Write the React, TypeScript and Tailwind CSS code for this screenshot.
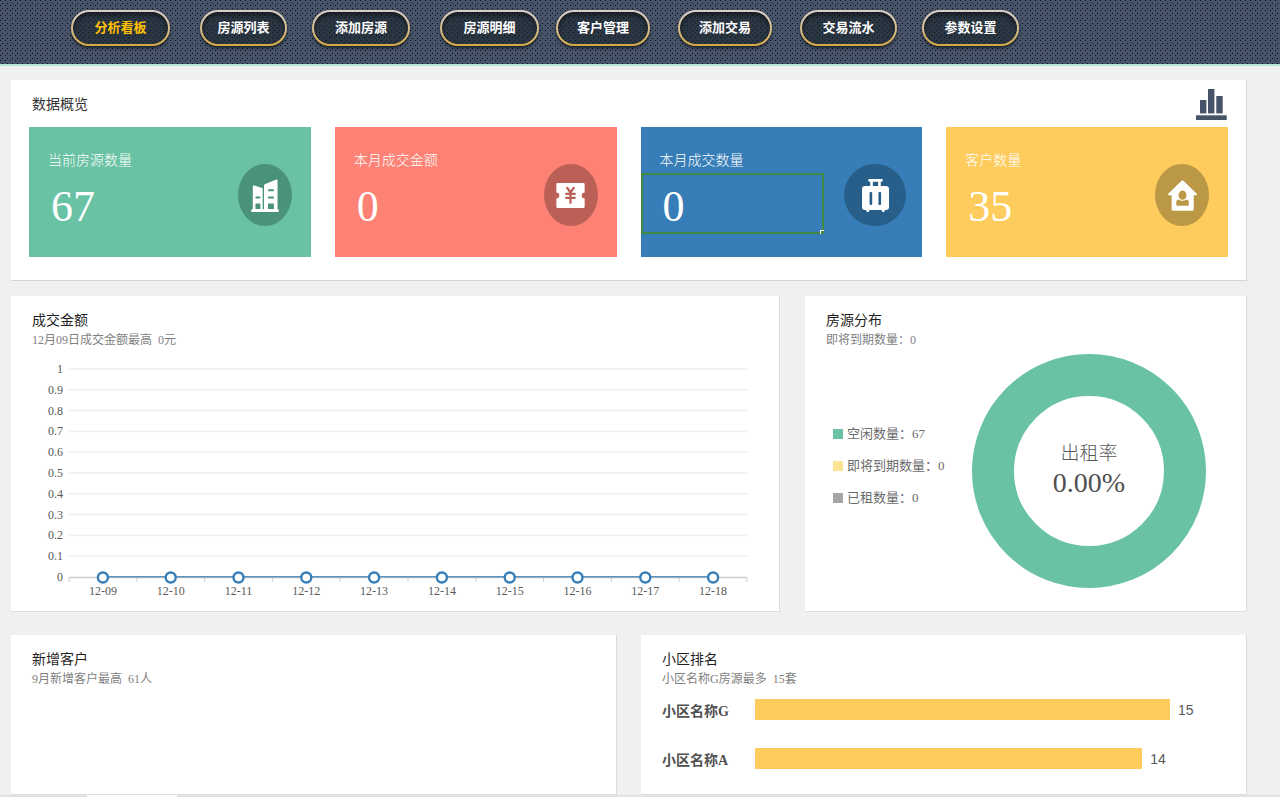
import type { ReactNode } from 'react';
import clsx from 'clsx';

interface NavItem {
    label: string;
    className: string;
}

interface Stat {
    label: string;
    value: number;
    tile: string;
    badge: string;
    icon: ReactNode;
    selected?: boolean;
}

const NAV_ITEMS: NavItem[] = [
    { label: '分析看板', className: 'w-[99px]' },
    { label: '房源列表', className: 'w-[87px] ml-[30px]' },
    { label: '添加房源', className: 'w-[98px] ml-[25px]' },
    { label: '房源明细', className: 'w-[99px] ml-[30px]' },
    { label: '客户管理', className: 'w-[94px] ml-[17px]' },
    { label: '添加交易', className: 'w-[94px] ml-[28px]' },
    { label: '交易流水', className: 'w-[97px] ml-[28px]' },
    { label: '参数设置', className: 'w-[97px] ml-[25px]' },
];

const DAYS = ['12-09', '12-10', '12-11', '12-12', '12-13', '12-14', '12-15', '12-16', '12-17', '12-18'];
const TICKS = ['1', '0.9', '0.8', '0.7', '0.6', '0.5', '0.4', '0.3', '0.2', '0.1', '0'];

const LEGEND = [
    { label: '空闲数量：67', swatch: 'bg-[#68c2a3]' },
    { label: '即将到期数量：0', swatch: 'bg-[#fee294]' },
    { label: '已租数量：0', swatch: 'bg-[#a5a5a5]' },
];

const RANKING = [
    { name: '小区名称G', count: 15 },
    { name: '小区名称A', count: 14 },
];

function BuildingIcon() {
    return (
        <svg viewBox="0 0 84 100" className="h-[33px] w-[28px]" aria-hidden="true">
            <g fill="#fff">
                <path d="M5 23q0-5 5-3l25 8v66H5z" />
                <path d="M39 20q0-4 4-5L75 2q5-1 5 4v88H39z" />
                <rect y="92" width="84" height="8" rx="3" />
            </g>
            <g fill="#4a937a">
                <rect x="13" y="53" width="15" height="6" rx="2" />
                <rect x="13" y="74" width="15" height="17" rx="1" />
                <rect x="51" y="31" width="18" height="6" rx="2" />
                <rect x="51" y="53" width="18" height="6" rx="2" />
                <rect x="51" y="74" width="18" height="17" rx="1" />
            </g>
        </svg>
    );
}

function TicketIcon() {
    return (
        <svg viewBox="0 0 86 76" className="h-[25px] w-[29px]" aria-hidden="true">
            <path d="M4 0h78q4 0 4 4v25a9 9 0 0 0 0 18v25q0 4-4 4H4q-4 0-4-4V47a9 9 0 0 0 0-18V4q0-4 4-4z" fill="#fff" />
            <path d="M33 15l10 14 10-14M43 29v31M30 33h26M30 45h26" fill="none" stroke="#bb6057" strokeWidth="7" strokeLinecap="round" />
        </svg>
    );
}

function SuitcaseIcon() {
    return (
        <svg viewBox="0 0 82 100" className="h-[33px] w-[27px]" aria-hidden="true">
            <g fill="#fff">
                <rect x="19" width="44" height="8" rx="4" />
                <rect x="25" y="3" width="8" height="24" />
                <rect x="49" y="3" width="8" height="24" />
                <rect y="21" width="82" height="73" rx="9" />
                <rect x="13" y="88" width="9" height="12" rx="4" />
                <rect x="60" y="88" width="9" height="12" rx="4" />
            </g>
            <rect x="23" y="39" width="8" height="40" rx="3" fill="#285f8a" />
            <rect x="50" y="39" width="8" height="40" rx="3" fill="#285f8a" />
        </svg>
    );
}

function HouseIcon() {
    return (
        <svg viewBox="0 0 88 92" className="h-[31px] w-[29px]" aria-hidden="true">
            <path d="M41 1q3-2 6 0l40 40q3 4-2 4h-7v43q0 4-4 4H15q-4 0-4-4V45H3q-5 0-2-4z" fill="#fff" />
            <ellipse cx="44" cy="45" rx="12" ry="14" fill="#bb9845" />
            <path d="M25 65q0-6 7-7 12 8 24 0 7 1 7 7v9q0 3-3 3H28q-3 0-3-3z" fill="#bb9845" />
        </svg>
    );
}

const STATS: Stat[] = [
    { label: '当前房源数量', value: 67, tile: 'bg-[#68c2a3]', badge: 'w-[54px] mr-[19px] bg-[#4a937a]', icon: <BuildingIcon /> },
    { label: '本月成交金额', value: 0, tile: 'bg-[#fd8174]', badge: 'w-[54px] mr-[19px] bg-[#bb6057]', icon: <TicketIcon /> },
    { label: '本月成交数量', value: 0, tile: 'bg-[#377eb8]', badge: 'w-[62px] mr-[16px] bg-[#285f8a]', icon: <SuitcaseIcon />, selected: true },
    { label: '客户数量', value: 35, tile: 'bg-[#fecc5c]', badge: 'w-[54px] mr-[19px] bg-[#bb9845]', icon: <HouseIcon /> },
];

function Header() {
    return (
        <header className="shrink-0 border-b-2 border-[#b5e6d8] bg-[#465368] bg-[conic-gradient(at_1px_1px,transparent_75%,#0b0f17_0),conic-gradient(at_1px_1px,transparent_75%,#0b0f17_0)] bg-size-[5px_5px] bg-position-[0_0,2px_3px]">
            <nav className="flex h-16 items-start pt-[10px] pl-[71px]">
                {NAV_ITEMS.map((item, index) => (
                    <button
                        key={item.label}
                        type="button"
                        className={clsx(
                            'h-9 shrink-0 rounded-full bg-linear-to-b from-[#d8cfcc] to-[#d3a93f] p-[2px] shadow-[0_2px_3px_rgba(0,0,0,0.6)]',
                            item.className,
                        )}
                    >
                        <span
                            className={clsx(
                                'flex h-8 items-center justify-center rounded-full bg-[#2b3643] bg-[conic-gradient(at_1px_1px,transparent_75%,#10161d_0),conic-gradient(at_1px_1px,transparent_75%,#10161d_0)] bg-size-[5px_5px] bg-position-[0_0,2px_3px] text-[13px] font-bold shadow-[inset_0_3px_4px_rgba(0,0,0,0.5)]',
                                index === 0 ? 'text-[#ffc000]' : 'text-white',
                            )}
                        >
                            {item.label}
                        </span>
                    </button>
                ))}
            </nav>
        </header>
    );
}

function Panel({ title, subtitle, children }: { title: string; subtitle: string; children?: ReactNode }) {
    return (
        <section className="min-w-0 border-r border-b border-[#dcdcdc] bg-white pt-[15px]">
            <h2 className="pl-[21px] text-sm leading-5 text-[#1f1f1f]">{title}</h2>
            <p className="pl-[21px] text-xs leading-[18px] whitespace-pre text-[#7f7f7f]">{subtitle}</p>
            {children}
        </section>
    );
}

function Overview() {
    return (
        <section className="h-[201px] border-r border-b border-[#d4d4d4] bg-white px-[18px] pt-[9px]">
            <div className="flex h-[38px] items-start justify-between">
                <h2 className="pt-[6px] pl-[3px] text-sm leading-5 text-[#333]">数据概览</h2>
                <svg viewBox="0 0 31 31" className="mr-px h-[31px] w-[31px]" fill="#465368" aria-hidden="true">
                    <rect x="4" y="11" width="6.4" height="13.4" />
                    <rect x="12" y="0" width="6.4" height="24.4" />
                    <rect x="20.3" y="7" width="6.4" height="17.4" />
                    <rect x="0" y="26.3" width="30.7" height="4.7" />
                </svg>
            </div>
            <div className="grid grid-cols-4 gap-6">
                {STATS.map((stat) => (
                    <div key={stat.label} className={clsx('flex h-[130px] items-start justify-between', stat.tile)}>
                        <div className="w-[65%]">
                            <div className="flex h-[46px] items-end pb-[2px] pl-[19px] text-sm font-light text-white">
                                {stat.label}
                            </div>
                            <div
                                className={clsx(
                                    'relative flex h-[61px] items-center border-2 pt-[6px] pl-[20px] text-[44px] leading-none text-white',
                                    stat.selected ? 'border-[#3f8a3f]' : 'border-transparent',
                                )}
                            >
                                {stat.value}
                                {stat.selected && (
                                    <span className="absolute -right-[2px] -bottom-[2px] h-1 w-1 border-t border-l border-white bg-[#3f8a3f]" />
                                )}
                            </div>
                        </div>
                        <div className={clsx('mt-[37px] flex h-[62px] items-center justify-center rounded-[50%]', stat.badge)}>
                            {stat.icon}
                        </div>
                    </div>
                ))}
            </div>
        </section>
    );
}

function AmountChart() {
    const left = 58;
    const right = 736;
    const top = 20;
    const rowHeight = 20.8;
    const step = (right - left) / DAYS.length;
    const baseY = top + rowHeight * 10;

    return (
        <svg viewBox="0 0 768 262" className="block h-auto w-full" role="img" aria-label="成交金额">
            {TICKS.map((tick, i) => (
                <g key={tick}>
                    {i < 10 && <line x1={left} x2={right} y1={top + rowHeight * i} y2={top + rowHeight * i} stroke="#efefef" strokeWidth="1.5" />}
                    <text x="52" y={top + rowHeight * i + 4} textAnchor="end" fontSize="12" fill="#595959">{tick}</text>
                </g>
            ))}
            <line x1={left} x2={right} y1={baseY + 0.5} y2={baseY + 0.5} stroke="#cfcfcf" strokeWidth="1.5" />
            {Array.from({ length: DAYS.length + 1 }, (_, i) => (
                <line key={i} x1={left + step * i} x2={left + step * i} y1={baseY} y2={baseY + 5} stroke="#cfcfcf" />
            ))}
            <line x1={left + step / 2} x2={right - step / 2} y1={baseY - 0.3} y2={baseY - 0.3} stroke="#5b92bc" strokeWidth="1.5" />
            {DAYS.map((day, i) => (
                <g key={day}>
                    <circle cx={left + step * (i + 0.5)} cy={baseY + 0.5} r="5" fill="#fff" stroke="#377eb8" strokeWidth="2.4" />
                    <text x={left + step * (i + 0.5)} y={baseY + 18} textAnchor="middle" fontSize="12" fill="#595959">{day}</text>
                </g>
            ))}
        </svg>
    );
}

function Distribution() {
    return (
        <div className="mt-[5px] flex items-start justify-between pr-[40px] pl-[28px]">
            <ul className="mt-[70px] flex flex-col gap-3">
                {LEGEND.map((item) => (
                    <li key={item.label} className="flex items-center gap-1 text-[13px] leading-5 whitespace-nowrap text-[#6b6b6b]">
                        <span className={clsx('h-[10px] w-[10px]', item.swatch)} />
                        {item.label}
                    </li>
                ))}
            </ul>
            <svg viewBox="0 0 234 234" className="h-[234px] w-[234px] shrink-0" role="img" aria-label="出租率">
                <circle cx="117" cy="117" r="96" fill="none" stroke="#68c2a3" strokeWidth="42" />
                <text x="117" y="106" textAnchor="middle" fontSize="19" fontWeight="300" fill="#595959">出租率</text>
                <text x="117" y="138" textAnchor="middle" fontSize="28" fill="#505050">0.00%</text>
            </svg>
        </div>
    );
}

function Ranking() {
    const max = Math.max(...RANKING.map((row) => row.count));

    return (
        <ul className="mt-[11px] flex flex-col gap-7 pr-[76px] pl-[21px]">
            {RANKING.map((row) => (
                <li key={row.name} className="flex h-[21px] items-center">
                    <span className="w-[93px] shrink-0 pt-1 text-sm font-semibold text-[#505050]">{row.name}</span>
                    <div className="flex flex-1 items-center">
                        <span className="h-[21px] shrink-0 bg-[#fecc5c]" style={{ width: `${(row.count / max) * 100}%` }} />
                        <span className="ml-2 font-['Liberation_Sans',sans-serif] text-sm text-[#595959]">{row.count}</span>
                    </div>
                </li>
            ))}
        </ul>
    );
}

export default function App() {
    return (
        <div className="flex h-screen flex-col overflow-hidden bg-[#f0f0f0] font-['Liberation_Serif','Noto_Sans_CJK_SC',serif]">
            <Header />
            <main className="flex min-h-0 flex-1 flex-col overflow-hidden pt-[14px] pr-[33px] pl-[11px]">
                <Overview />
                <div className="mt-[15px] grid grid-cols-[769fr_442fr] gap-[25px]">
                    <Panel title="成交金额" subtitle="12月09日成交金额最高  0元">
                        <AmountChart />
                    </Panel>
                    <Panel title="房源分布" subtitle="即将到期数量：0">
                        <Distribution />
                    </Panel>
                </div>
                <div className="mt-[23px] grid flex-1 grid-cols-2 gap-6">
                    <Panel title="新增客户" subtitle="9月新增客户最高  61人" />
                    <Panel title="小区排名" subtitle="小区名称G房源最多  15套">
                        <Ranking />
                    </Panel>
                </div>
            </main>
            <div className="flex h-[2px] shrink-0 bg-[#dfe3e8] pl-[87px]">
                <div className="w-[90px] bg-white" />
            </div>
        </div>
    );
}
